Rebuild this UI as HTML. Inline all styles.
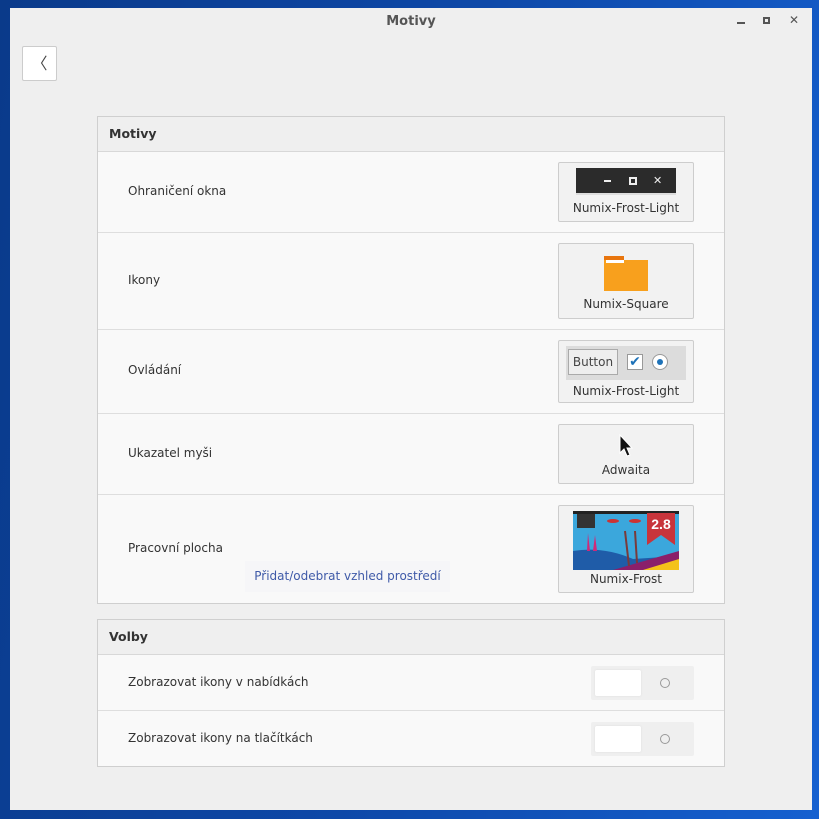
<!DOCTYPE html>
<html><head><meta charset="utf-8"><style>
*{box-sizing:border-box;margin:0;padding:0}
body{width:819px;height:819px;overflow:hidden;background:linear-gradient(100deg,#0a3a8a 0%,#0d48a8 50%,#1560d0 100%);font-family:"DejaVu Sans","Liberation Sans",sans-serif;font-size:12px;color:#333;position:relative}
.win{position:absolute;left:10px;top:8px;width:802px;height:802px;background:#efefef}
.title{position:absolute;left:0;right:0;top:6px;text-align:center;font-weight:bold;color:#555;font-size:13px}
.wc{position:absolute;top:7px;font-size:12px;color:#555;font-weight:bold}
.back{position:absolute;left:12px;top:38px;width:35px;height:35px;background:#fff;border:1px solid #ccc;border-radius:2px;text-align:center;line-height:33px;color:#444;font-size:16px}
.panel{position:absolute;left:87px;width:628px;border:1px solid #cfcfcf;background:#f9f9f9}
.ph{height:35px;background:#efefef;border-bottom:1px solid #d8d8d8;font-weight:bold;padding-left:11px;line-height:34px;color:#333;font-size:12.5px}
.row{position:absolute;left:0;right:0;border-top:1px solid #dedede}
.lbl{position:absolute;left:30px;color:#333}
.btn{position:absolute;left:460px;width:136px;background:#f2f2f2;border:1px solid #cdcdcd;border-radius:2px;text-align:center;color:#333;font-size:12px}
.sw{position:absolute;left:493px;width:103px;height:34px;background:#efefef;border-radius:2px}
.sw .k{position:absolute;left:4px;top:4px;width:46px;height:26px;background:#fff;border-radius:2px;box-shadow:0 0 2px #ddd}
.sw .c{position:absolute;left:69px;top:12px;width:10px;height:10px;border:1px solid #999;border-radius:50%}
</style></head><body>
<div class="win">
<div class="title">Motivy</div>
<div class="wc" style="left:727px;top:14px;width:8px;height:2px;background:#555"></div>
<div class="wc" style="left:753px;top:9px;width:7px;height:7px;border:2px solid #555"></div>
<div class="wc" style="left:779px;top:5px">✕</div>
<div class="back">〈</div>

<div class="panel" style="top:108px;height:488px">
<div class="ph">Motivy</div>
<div class="lbl" style="top:67px">Ohraničení okna</div>
<div class="btn" style="top:45px;height:60px">
 <div style="margin:5px auto 0;width:100px;height:27px;background:#2b2b2b;border-bottom:2px solid #ddd;position:relative;color:#eee;font-weight:bold;font-size:11px">
  <span style="position:absolute;left:28px;top:12px;width:7px;height:2px;background:#eee"></span>
  <span style="position:absolute;left:53px;top:9px;width:8px;height:8px;border:2px solid #eee"></span>
  <span style="position:absolute;left:77px;top:6px">✕</span>
 </div>
 <div style="margin-top:6px">Numix-Frost-Light</div>
</div>
<div class="row" style="top:115px"></div>
<div class="lbl" style="top:156px">Ikony</div>
<div class="btn" style="top:126px;height:76px">
 <svg width="44" height="36" style="margin-top:12px" viewBox="0 0 44 36"><rect x="0" y="0" width="20" height="8" fill="#e8750e"/><rect x="0" y="4" width="44" height="31" fill="#f8a01d"/><rect x="2" y="4" width="18" height="3" fill="#fff"/></svg>
 <div style="margin-top:2px">Numix-Square</div>
</div>
<div class="row" style="top:212px"></div>
<div class="lbl" style="top:246px">Ovládání</div>
<div class="btn" style="top:223px;height:63px">
 <div style="margin:5px auto 0;width:120px;height:34px;background:#dcdcdc;position:relative">
  <div style="position:absolute;left:2px;top:3px;width:50px;height:26px;border:1px solid #aaa;background:#eee;line-height:24px;font-size:12px;color:#444">Button</div>
  <div style="position:absolute;left:61px;top:8px;width:16px;height:16px;border:1px solid #999;background:#fff;color:#1e72b8;font-size:14px;line-height:14px;font-weight:bold">✔</div>
  <div style="position:absolute;left:86px;top:8px;width:16px;height:16px;border:1px solid #999;border-radius:50%;background:#fff"><div style="margin:4px;width:6px;height:6px;border-radius:50%;background:#1e72b8"></div></div>
 </div>
 <div style="margin-top:4px">Numix-Frost-Light</div>
</div>
<div class="row" style="top:296px"></div>
<div class="lbl" style="top:329px">Ukazatel myši</div>
<div class="btn" style="top:307px;height:60px">
 <svg width="16" height="24" style="margin-top:9px" viewBox="0 0 16 24"><path d="M2 1 L2 19 L6 15 L9 22 L12 21 L9 14 L14 14 Z" fill="#111" stroke="#fff" stroke-width="1"/></svg>
 <div style="margin-top:2px">Adwaita</div>
</div>
<div class="row" style="top:377px"></div>
<div class="lbl" style="top:424px">Pracovní plocha</div>
<div style="position:absolute;left:147px;top:444px;width:205px;height:31px;background:#f6f6f8;color:#3f5aa8;line-height:31px;text-align:center;font-size:12px">Přidat/odebrat vzhled prostředí</div>
<div class="btn" style="top:388px;height:88px">
 <svg width="106" height="59" style="margin-top:5px;display:block;margin-left:14px" viewBox="0 0 106 59">
  <rect width="106" height="59" fill="#3ba7dc"/>
  <rect width="106" height="3" fill="#222"/>
  <rect x="4" y="3" width="18" height="14" fill="#333"/>
  <path d="M0 40 Q30 35 60 48 L106 45 L106 59 L0 59Z" fill="#1f5ca8"/>
  <path d="M40 59 L106 40 L106 59Z" fill="#8a1f6a"/>
  <path d="M70 59 L106 48 L106 59Z" fill="#f4c21a"/>
  <path d="M74 2 L102 2 L102 34 L88 24 L74 34Z" fill="#c8343b"/>
  <text x="88" y="18" font-family="Liberation Sans" font-weight="bold" font-size="14" fill="#fff" text-anchor="middle">2.8</text>
  <path d="M14 40 L15 22 L17 40Z M20 40 L22 24 L24 40Z" fill="#d02a7a"/>
  <line x1="52" y1="20" x2="56" y2="55" stroke="#7a3a3a" stroke-width="2"/>
  <line x1="62" y1="20" x2="64" y2="52" stroke="#7a3a3a" stroke-width="2"/>
  <ellipse cx="40" cy="10" rx="6" ry="2" fill="#c33"/><ellipse cx="62" cy="10" rx="6" ry="2" fill="#c33"/>
 </svg>
 <div style="margin-top:2px">Numix-Frost</div>
</div>
</div>

<div class="panel" style="top:611px;height:148px">
<div class="ph">Volby</div>
<div class="lbl" style="top:55px">Zobrazovat ikony v nabídkách</div>
<div class="sw" style="top:46px"><div class="k"></div><div class="c"></div></div>
<div class="row" style="top:90px"></div>
<div class="lbl" style="top:111px">Zobrazovat ikony na tlačítkách</div>
<div class="sw" style="top:102px"><div class="k"></div><div class="c"></div></div>
</div>
</div>
</body></html>
